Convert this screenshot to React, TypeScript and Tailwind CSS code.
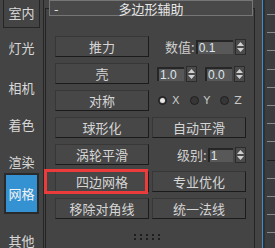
import React from 'react'

const cjk = { fontFamily: '"Noto Sans CJK SC", "Noto Sans", sans-serif' }

const Btn = ({ label }: { label: string }): React.ReactNode => (
  <div className="flex h-[21px] w-[94px] items-center justify-center border border-t-[#373737] border-l-[#373737] border-b-[#1b1b1b] border-r-[#1b1b1b] bg-[#474747] text-[13px] leading-none text-[#d6d6d6]">
    {label}
  </div>
)

const Arrows = (): React.ReactNode => (
  <div className="flex h-[16px] w-[11px] flex-col items-center justify-center gap-[2px] border border-[#2c2c2c] bg-[#4b4b4b]">
    <svg width="7" height="4" viewBox="0 0 7 4">
      <path d="M0 4 L3.5 0 L7 4 Z" fill="#d0d0d0" />
    </svg>
    <svg width="7" height="4" viewBox="0 0 7 4">
      <path d="M0 0 L3.5 4 L7 0 Z" fill="#d0d0d0" />
    </svg>
  </div>
)

const Spinner = ({ value, width }: { value: string; width: string }): React.ReactNode => (
  <div className="flex items-center gap-[2px]">
    <div
      className={`${width} flex h-[14px] items-center border-t-2 border-l-2 border-[#262626] bg-[#585858] pl-[1px] text-[12px] leading-none text-[#dde6ee]`}
      style={{ fontFamily: '"Liberation Sans", sans-serif' }}
    >
      {value}
    </div>
    <Arrows />
  </div>
)

const Radio = ({ on, label }: { on?: boolean; label: string }): React.ReactNode => (
  <div className="flex items-center gap-[5px]">
    <div className="flex h-[9px] w-[9px] items-center justify-center rounded-full border border-[#1f1f1f] bg-[#363636]">
      {on && <div className="h-[5px] w-[5px] rounded-full bg-[#e8e8e8]" />}
    </div>
    <span className="text-[11px] leading-none text-[#c8c8c8]" style={{ fontFamily: '"DejaVu Sans", sans-serif' }}>
      {label}
    </span>
  </div>
)

const tabs = [
  { label: '灯光', h: 'h-[44px]' },
  { label: '相机', h: 'h-[42px]' },
  { label: '着色', h: 'h-[38px]' },
]

const App = (): React.ReactNode => {
  return (
    <div className="flex h-[248px] w-[275px] overflow-hidden bg-[#444444]" style={cjk}>
      {/* tab column */}
      <div className="flex w-[43px] flex-col text-[13px] text-[#d8d8d8]">
        <div className="mx-[3px] mt-[-10px] flex h-[40px] items-center justify-center border border-[#262626] pt-[8px]">
          室内
        </div>
        {tabs.map((t) => (
          <div key={t.label} className={`${t.h} flex items-center justify-center`}>
            {t.label}
          </div>
        ))}
        <div className="flex h-[32px] items-center justify-center pt-[8px]">渲染</div>
        <div className="mx-[4px] flex h-[44px] items-center justify-center border-2 border-[#2a2a2a] bg-[#3592d2] text-[#f2f2f2]">
          网格
        </div>
        <div className="flex h-[34px] shrink-0 items-center justify-center pt-[20px]">其他</div>
      </div>
      <div className="w-[1px] bg-[#262626]" />

      {/* main rollout area */}
      <div className="relative w-[218px] pl-[1px]">
        <div className="mt-[8px] h-[260px] w-[210px] border-t border-l border-r border-[#242424]">
          <div className="mt-[-9px] ml-[3px] flex h-[16px] w-[204px] items-center border border-[#767676] bg-[#494949] text-[13px] leading-none text-[#e6e6e6]">
            <span className="w-[10px] pl-[4px]">-</span>
            <span className="flex-1 text-center">多边形辅助</span>
            <span className="w-[10px]" />
          </div>

          <div className="mt-[20px] ml-[9px] flex flex-col gap-[6px]">
            <div className="flex items-center">
              <Btn label="推力" />
              <span className="ml-[16px] text-[13px] leading-none text-[#cfcfcf]">数值:</span>
              <div className="ml-[1px]">
                <Spinner value="0.1" width="w-[37px]" />
              </div>
            </div>
            <div className="flex items-center">
              <Btn label="壳" />
              <div className="ml-[8px]">
                <Spinner value="1.0" width="w-[27px]" />
              </div>
              <div className="ml-[8px]">
                <Spinner value="0.0" width="w-[27px]" />
              </div>
            </div>
            <div className="flex items-center">
              <Btn label="对称" />
              <div className="ml-[9px] flex items-center gap-[10px]">
                <Radio on label="X" />
                <Radio label="Y" />
                <Radio label="Z" />
              </div>
            </div>
            <div className="flex items-center gap-[3px]">
              <Btn label="球形化" />
              <Btn label="自动平滑" />
            </div>
            <div className="flex items-center">
              <Btn label="涡轮平滑" />
              <span className="ml-[28px] text-[13px] leading-none text-[#cfcfcf]">级别:</span>
              <div className="ml-[1px]">
                <Spinner value="1" width="w-[25px]" />
              </div>
            </div>
            <div className="relative flex items-center gap-[3px]">
              <Btn label="四边网格" />
              <Btn label="专业优化" />
              <div className="absolute top-[-2px] left-[-11px] h-[25px] w-[104px] border-[3px] border-[#ec3b3b]" />
            </div>
            <div className="flex items-center gap-[3px]">
              <Btn label="移除对角线" />
              <Btn label="统一法线" />
            </div>
          </div>

          <div className="mt-[15px] ml-[88px] flex gap-[4px]">
            {[0, 1, 2, 3, 4].map((i) => (
              <div key={i} className="flex flex-col gap-[2px]">
                <div className="h-[2px] w-[2px] bg-[#1e1e1e]" />
                <div className="h-[2px] w-[2px] bg-[#1e1e1e]" />
              </div>
            ))}
          </div>
        </div>
      </div>

      {/* scroll strip */}
      <div className="w-[1px] bg-[#3a8fd0]" />
      <div className="w-[2px] bg-[#303030]" />
      <div className="flex flex-1 flex-col bg-[#3d3d3d] pt-[14px] pl-[2px]">
        {Array.from({ length: 13 }).map((_, i) => (
          <div key={i} className="mb-[17.2px] flex h-[1px]">
            <div className={`h-[1px] w-full ${i === 8 ? 'bg-[#1e1e1e]' : 'bg-[#8a8a8a]'}`} />
          </div>
        ))}
      </div>
    </div>
  )
}

export default App
